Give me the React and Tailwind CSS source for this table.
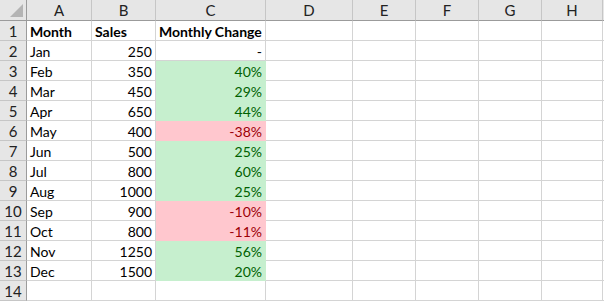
const cols = [
  { key: 'A', w: 'w-[65px]' },
  { key: 'B', w: 'w-[64px]' },
  { key: 'C', w: 'w-[110px]' },
  { key: 'D', w: 'w-[87px]' },
  { key: 'E', w: 'w-[63px]' },
  { key: 'F', w: 'w-[63px]' },
  { key: 'G', w: 'w-[63px]' },
  { key: 'H', w: 'w-[61px]' },
]

const rows = [
  ['Month', 'Sales', 'Monthly Change'],
  ['Jan', '250', '-'],
  ['Feb', '350', '40%'],
  ['Mar', '450', '29%'],
  ['Apr', '650', '44%'],
  ['May', '400', '-38%'],
  ['Jun', '500', '25%'],
  ['Jul', '800', '60%'],
  ['Aug', '1000', '25%'],
  ['Sep', '900', '-10%'],
  ['Oct', '800', '-11%'],
  ['Nov', '1250', '56%'],
  ['Dec', '1500', '20%'],
  ['', '', ''],
]

function cellStyle(r, c, v) {
  if (c !== 2 || r < 2 || !v || v === '-') return 'bg-white border-[#d4d4d4] text-black'
  if (v.startsWith('-')) return 'bg-[#ffc7ce] border-[#ffc7ce] text-[#9c0006]'
  return 'bg-[#c6efce] border-[#c6efce] text-[#006100]'
}

export default function App() {
  return (
    <div className="w-[604px] h-[301px] overflow-hidden bg-white text-[14px] leading-none" style={{ fontFamily: 'Lato, "Liberation Sans", sans-serif' }}>
      {/* column headers */}
      <div className="flex h-[21px]">
        <div className="relative w-[27px] h-[21px] bg-[#e6e6e6] border-r border-b border-[#9b9b9b] shrink-0">
          <div className="absolute right-[3px] bottom-[3px] w-0 h-0" style={{ borderBottom: '13px solid #b4b4b4', borderLeft: '13px solid transparent' }} />
        </div>
        {cols.map((c) => (
          <div key={c.key} className={`${c.w} shrink-0 h-[21px] bg-[#e6e6e6] border-r border-b border-r-[#c6c6c6] border-b-[#9b9b9b] flex items-center justify-center text-[#222] text-[15px]`}>
            {c.key}
          </div>
        ))}
        <div className="flex-1 h-[21px] bg-[#e6e6e6] border-b border-[#9b9b9b]" />
      </div>

      {rows.map((row, r) => (
        <div key={r} className="flex h-[20px]">
          <div className="w-[27px] shrink-0 h-[20px] bg-[#e6e6e6] border-r border-b border-r-[#9b9b9b] border-b-[#c6c6c6] flex items-center justify-center text-[#222] text-[15px] pt-[2px]">
            {r + 1}
          </div>
          {cols.map((c, ci) => {
            const v = row[ci] || ''
            const bold = r === 0
            const right = r > 0 && (ci === 1 || ci === 2)
            return (
              <div
                key={c.key}
                className={`${c.w} shrink-0 h-[20px] border-r border-b ${cellStyle(r, ci, v)} flex items-center pt-[2px] ${right ? 'justify-end pr-[3px]' : 'pl-[3px]'} ${bold ? 'font-bold' : ''} whitespace-nowrap`}
              >
                {v}
              </div>
            )
          })}
          <div className="flex-1 h-[20px] border-b border-[#d4d4d4]" />
        </div>
      ))}
    </div>
  )
}
